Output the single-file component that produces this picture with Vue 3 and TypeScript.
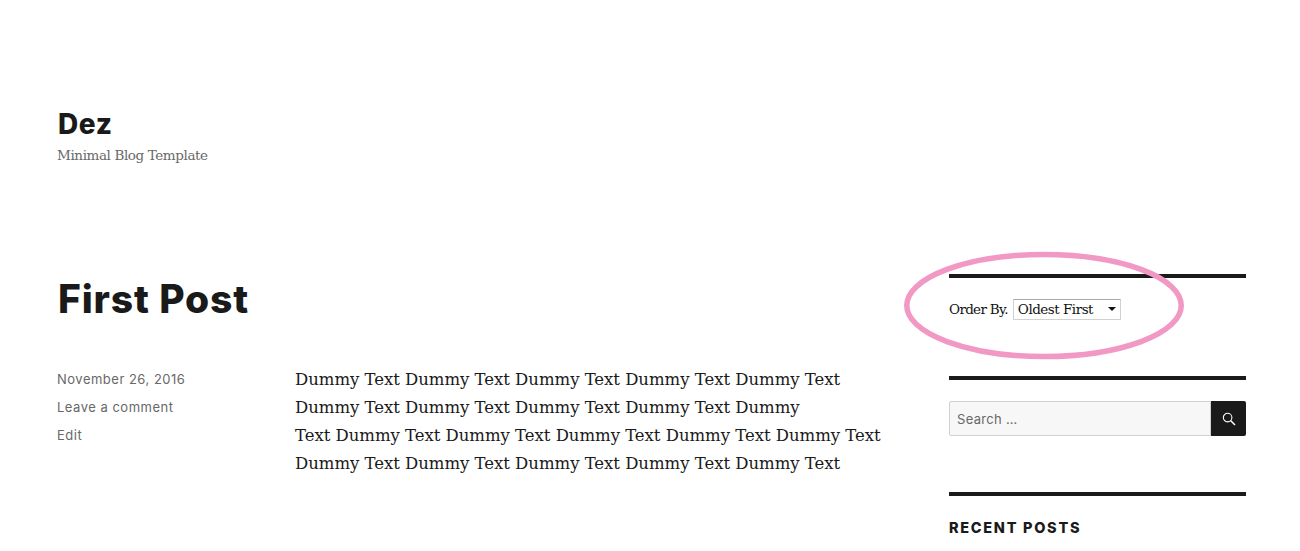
<script setup lang="ts">
const lines: string[] = [
  'Dummy Text Dummy Text Dummy Text Dummy Text Dummy Text',
  'Dummy Text Dummy Text Dummy Text Dummy Text Dummy',
  'Text Dummy Text Dummy Text Dummy Text Dummy Text Dummy Text',
  'Dummy Text Dummy Text Dummy Text Dummy Text Dummy Text',
]
</script>

<template>
  <div class="page">
    <header class="site-header">
      <h1 class="site-title">Dez</h1>
      <p class="tagline">Minimal Blog Template</p>
    </header>
    <div class="columns">
      <main class="post">
        <h2 class="post-title">First Post</h2>
        <div class="post-body">
          <ul class="meta">
            <li>November 26, 2016</li>
            <li>Leave a comment</li>
            <li>Edit</li>
          </ul>
          <div class="content">
            <div v-for="(line, i) in lines" :key="i">{{ line }}</div>
          </div>
        </div>
      </main>
      <aside class="sidebar">
        <section class="widget order">
          <label class="order-label">Order By.</label>
          <span class="select">
            <span class="select-value">Oldest First</span>
            <span class="arrow"></span>
          </span>
        </section>
        <section class="widget search">
          <div class="search-input">Search …</div>
          <button class="search-btn" aria-label="Search">
            <svg width="14" height="14" viewBox="0 0 14 14" fill="none" stroke="#fff">
              <circle cx="5.6" cy="5.6" r="4.3" stroke-width="1.1" />
              <path d="M8.8 8.8 L13 13" stroke-width="1.5" />
            </svg>
          </button>
        </section>
        <section class="widget recent">
          <h3 class="widget-title">RECENT POSTS</h3>
        </section>
      </aside>
    </div>
    <svg class="circle" width="290" height="118" viewBox="0 0 290 118">
      <ellipse cx="145" cy="58.5" rx="137.25" ry="51" fill="none" stroke="#f199c4" stroke-width="5.5" />
    </svg>
  </div>
</template>

<style>
html, body { margin: 0; background: #fff; overflow: hidden; }
</style>

<style scoped>
.page {
  position: relative;
  box-sizing: border-box;
  width: 1300px;
  height: 551px;
  overflow: hidden;
  padding: 107px 54px 0 57px;
  color: #1a1a1a;
}
.site-title {
  margin: 0 0 0 1px;
  font: 800 28px/34px "Inter", sans-serif;
  letter-spacing: 0.6px;
}
.tagline {
  margin: 3px 0 0;
  font: 400 13.5px/22px "DejaVu Serif", serif;
  letter-spacing: -0.4px;
  color: #686868;
}
.columns {
  display: flex;
  justify-content: space-between;
  margin-top: 108px;
}
.post { width: 830px; }
.post-title {
  margin: 2px 0 0 1px;
  font: 800 39px/46px "Inter", sans-serif;
  letter-spacing: 0.85px;
}
.post-body {
  display: flex;
  margin-top: 44px;
}
.meta {
  list-style: none;
  margin: -1px 0 0;
  padding: 0;
  width: 238px;
  font: 400 13px/28px "Inter", sans-serif;
  letter-spacing: 0.5px;
  color: #686868;
}
.content {
  font: 400 16.5px/28px "DejaVu Serif", serif;
  letter-spacing: -0.03px;
  white-space: nowrap;
  color: #1a1a1a;
}
.sidebar { width: 297px; }
.widget { border-top: 4px solid #1a1a1a; }
.order {
  display: flex;
  align-items: center;
  gap: 5px;
  height: 102px;
  padding-bottom: 36px;
  box-sizing: border-box;
  font: 400 13.5px/20px "DejaVu Serif", serif;
  color: #111;
}
.order-label { letter-spacing: -0.68px; }
.select {
  display: flex;
  align-items: center;
  justify-content: space-between;
  box-sizing: border-box;
  width: 108px;
  height: 21px;
  padding: 0 4px 0 4px;
  border: 1px solid #d1d1d1;
  border-top-color: #a9a9a9;
  border-radius: 1px;
  background: #fff;
  letter-spacing: -0.5px;
}
.arrow {
  width: 0;
  height: 0;
  border-left: 4px solid transparent;
  border-right: 4px solid transparent;
  border-top: 4px solid #111;
}
.search {
  display: flex;
  height: 116px;
  padding-top: 21px;
  box-sizing: border-box;
}
.search-input {
  flex: 1;
  box-sizing: border-box;
  height: 35px;
  padding-left: 7px;
  background: #f7f7f7;
  border: 1px solid #d1d1d1;
  border-radius: 2px 0 0 2px;
  font: 400 13px/35px "Inter", sans-serif;
  letter-spacing: 0.3px;
  color: #686868;
}
.search-btn {
  display: flex;
  align-items: center;
  justify-content: center;
  width: 35px;
  height: 35px;
  padding: 0;
  border: 0;
  border-radius: 0 2px 2px 0;
  background: #1a1a1a;
}
.widget-title {
  margin: 22px 0 0;
  font: 800 14.5px/20px "Inter", sans-serif;
  letter-spacing: 1.7px;
}
.circle {
  position: absolute;
  left: 899px;
  top: 247px;
}
</style>
